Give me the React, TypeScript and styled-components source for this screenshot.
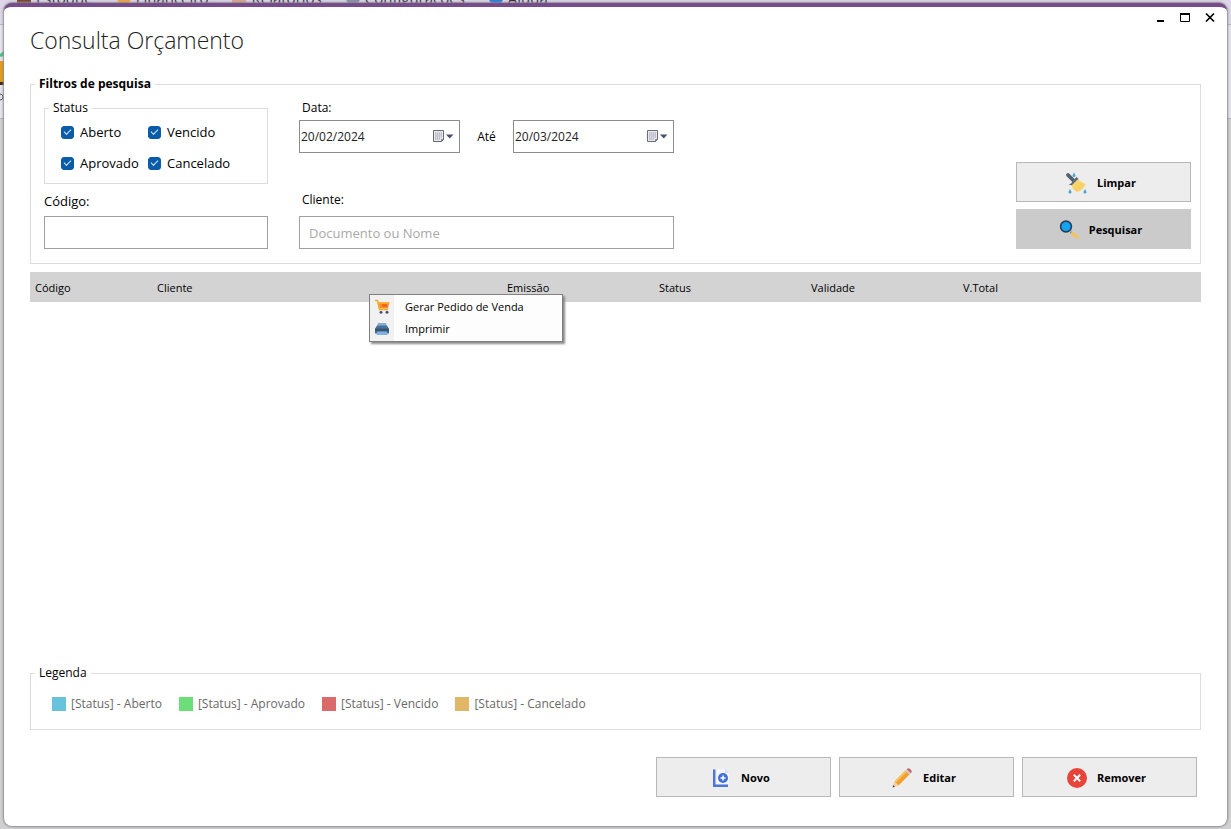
import React from "react";
import styled, { createGlobalStyle } from "styled-components";

const GlobalStyle = createGlobalStyle`
  *, *::before, *::after { box-sizing: border-box; }
  body {
    margin: 0;
    background: #d0d0d2;
    color: #000;
    font-family: "Open Sans", "Noto Sans", sans-serif;
    font-size: 12px;
    line-height: 16px;
  }
  button, input { font: inherit; color: inherit; }
`;

/* ---------- application behind the dialog ---------- */

const Desktop = styled.div`
  display: grid;
  min-height: 100vh;
  overflow: hidden;
`;

const Backdrop = styled.div`
  grid-area: 1 / 1;
  display: flex;
  flex-direction: column;
  min-width: 0;
`;

const MenuBar = styled.nav`
  display: flex;
  gap: 24px;
  height: 25px;
  padding-left: 17px;
  overflow: hidden;
  background: #dcd6e8;
  border-bottom: 1px solid #b9b6c0;
`;

const MenuLink = styled.a`
  display: flex;
  align-items: center;
  gap: 5px;
  height: 20px;
  margin-top: -12px;
  color: #33303c;
  font-size: 15px;
  line-height: 20px;
  text-decoration: none;
`;

const Dot = styled.span<{ $color: string; $round?: boolean }>`
  width: 14px;
  height: 14px;
  background: ${(p) => p.$color};
  border-radius: ${(p) => (p.$round ? "7px" : "1px")};
`;

const Ribbon = styled.div`
  height: 94px;
  background: #e4e2ea;
  border-bottom: 1px solid #b4b4b8;
`;

/* ---------- dialog ---------- */

const Window = styled.main`
  grid-area: 1 / 1;
  display: flex;
  flex-direction: column;
  min-width: 0;
  margin: 3px 4px;
  padding: 0 26px 29px;
  background: #fff;
  border-top: 4px solid #774b8c;
  border-radius: 8px;
  box-shadow: 0 0 2px 1px #8c8c8c;
`;

const TitleBar = styled.header`
  display: flex;
  justify-content: space-between;
  height: 69px;
`;

const Title = styled.h1`
  margin: 16px 0 0;
  color: #222;
  font-size: 23px;
  font-weight: 300;
  line-height: 34px;
`;

const WindowControls = styled.div`
  display: flex;
  gap: 1px;
  height: 22px;
  margin-right: -21px;
`;

const ControlButton = styled.button`
  display: grid;
  place-items: center;
  width: 24px;
  height: 22px;
  padding: 0;
  background: none;
  border: 0;
`;

const Group = styled.fieldset`
  min-width: 0;
  margin: 0;
  padding: 0 9px 14px 4px;
  border: 1px solid #dcdcdc;
`;

const GroupLegend = styled.legend<{ $bold?: boolean }>`
  padding: 0 4px;
  font-weight: ${(p) => (p.$bold ? 700 : 400)};
  line-height: 16px;
`;

const Filters = styled.div`
  display: flex;
  align-items: flex-end;
  gap: 31px;
  padding: 8px 0 0 9px;
`;

const FilterColumn = styled.div<{ $width: number }>`
  display: flex;
  flex-direction: column;
  justify-content: space-between;
  width: ${(p) => p.$width}px;
  height: 149px;
`;

const StatusGroup = styled(Group)`
  padding: 0 0 12px 4px;
`;

const CheckGrid = styled.div`
  display: grid;
  grid-template-columns: 87px 1fr;
  row-gap: 15px;
  padding: 8px 0 0 12px;
`;

const CheckLabel = styled.label`
  display: flex;
  align-items: center;
  gap: 6px;
  font-size: 13px;
`;

const CheckBox = styled.input`
  appearance: none;
  display: grid;
  place-items: center;
  width: 13px;
  height: 13px;
  margin: 0;
  background: #fff;
  border: 1px solid #0a5ca8;
  border-radius: 3px;

  &:checked { background: #0a5ca8; }
  &:checked::after {
    content: "";
    width: 7px;
    height: 4px;
    margin-bottom: 2px;
    border: solid #d5e8fa;
    border-width: 0 0 1px 1px;
    transform: rotate(-45deg);
  }
`;

const Field = styled.div`
  display: flex;
  flex-direction: column;
  gap: 4px;
`;

const FieldLabel = styled.label`
  padding-left: 3px;
`;

const CodeField = styled(Field)`
  gap: 7px;
`;

const ClientField = styled(Field)`
  gap: 8px;
`;

const CodeLabel = styled.label`
  font-size: 13px;
`;

const TextInput = styled.input`
  width: 100%;
  height: 33px;
  padding: 0 9px;
  background: #fff;
  border: 1px solid #a0a0a0;
  border-radius: 0;
  font-size: 13px;

  &::placeholder { color: #a9a9a9; opacity: 1; }
`;

const DateRow = styled.div`
  display: flex;
  align-items: center;
  justify-content: space-between;
`;

const DateBox = styled.div`
  display: flex;
  align-items: center;
  width: 161px;
  height: 33px;
  padding: 0 5px 0 1px;
  border: 1px solid #8c8c8c;
`;

const DateInput = styled.input`
  flex: 1;
  min-width: 0;
  height: 25px;
  padding: 0;
  background: none;
  border: 0;
  color: #222;
`;

const CalendarButton = styled.button`
  display: flex;
  padding: 0;
  background: none;
  border: 0;
`;

const FilterActions = styled.div`
  display: flex;
  flex-direction: column;
  gap: 7px;
  margin-left: auto;
`;

const ActionButton = styled.button<{ $active?: boolean }>`
  display: flex;
  align-items: center;
  justify-content: center;
  gap: 10px;
  width: 175px;
  height: 40px;
  padding: 1px 6px 0 0;
  background: ${(p) => (p.$active ? "#cbcbcb" : "#ededed")};
  border: 1px solid ${(p) => (p.$active ? "#cbcbcb" : "#b8b8b8")};
  font-size: 11px;
  font-weight: 700;
`;

/* ---------- results ---------- */

const Results = styled.section`
  position: relative;
  flex: 1;
  min-height: 200px;
  margin: 8px 0 2px;
`;

const Table = styled.table`
  width: 100%;
  border-collapse: collapse;
  table-layout: fixed;
`;

const HeadCell = styled.th<{ $width?: number }>`
  width: ${(p) => (p.$width ? `${p.$width}px` : "auto")};
  height: 30px;
  padding: 1px 5px 0;
  background: #d3d3d3;
  font-size: 11px;
  font-weight: 400;
  text-align: left;
`;

const ContextMenu = styled.div`
  position: absolute;
  top: 22px;
  left: 339px;
  display: flex;
  flex-direction: column;
  width: 194px;
  padding: 1px;
  background: linear-gradient(to right, #f1f1f1 24px, #fdfdfd 24px);
  border: 1px solid #808080;
  box-shadow: 2px 2px 2px #8a8a8a;
`;

const ContextItem = styled.button`
  display: flex;
  align-items: center;
  gap: 15px;
  height: 22px;
  padding: 0 0 0 3px;
  background: none;
  border: 0;
  font-size: 11px;
`;

/* ---------- footer ---------- */

const LegendList = styled.ul`
  display: flex;
  flex-wrap: wrap;
  gap: 17px;
  margin: 0;
  padding: 15px 0 3px 17px;
  list-style: none;
  color: #696969;
`;

const LegendItem = styled.li`
  display: flex;
  align-items: center;
  gap: 5px;
`;

const Swatch = styled.span<{ $color: string }>`
  width: 14px;
  height: 14px;
  background: ${(p) => p.$color};
`;

const Footer = styled.footer`
  display: flex;
  justify-content: flex-end;
  gap: 8px;
  padding: 27px 4px 0 0;
`;

/* ---------- icons ---------- */

const MinimizeIcon = () => (
  <svg width="12" height="12" viewBox="0 0 12 12" aria-hidden="true">
    <path d="M3 9h7" stroke="#000" strokeWidth="2" />
  </svg>
);

const MaximizeIcon = () => (
  <svg width="12" height="12" viewBox="0 0 12 12" aria-hidden="true">
    <path d="M1.500 2v7.500h9V2" fill="none" stroke="#000" />
    <path d="M1 2h10" stroke="#000" strokeWidth="2" />
  </svg>
);

const CloseIcon = () => (
  <svg width="12" height="12" viewBox="0 0 12 12" aria-hidden="true">
    <path d="M2 1.500l8 8M10 1.500l-8 8" stroke="#000" strokeWidth="1.700" />
  </svg>
);

const CalendarIcon = () => (
  <svg width="22" height="13" viewBox="0 0 22 13" aria-hidden="true">
    <path d="M1.500.5h10v9l-2 2h-8z" fill="#e9e9ee" stroke="#676a78" />
    <path d="M3 3h7M3 5h7M3 7h7M3 9h5M3.500 2.500v7.500M5.500 2.500v7.500M7.500 2.500v7M9.500 2.500v5" stroke="#b4b6c0" strokeWidth=".7" />
    <path d="M9.500 11.500v-2h2z" fill="#c4c5ce" stroke="#676a78" strokeWidth=".8" />
    <path d="M14 4.500h7.500L17.700 8.500z" fill="#46536b" />
  </svg>
);

const BrushIcon = () => (
  <svg width="22" height="22" viewBox="0 0 22 22" aria-hidden="true">
    <path d="M3 3l5 5" stroke="#50606e" strokeWidth="3.800" strokeLinecap="round" />
    <path d="M3.500 12.500c2-.3 3.500-1.500 4-3.500l4-4 2.200 2-6.200 6.500z" fill="#596a77" />
    <path d="M12.500 7.500c2.500 2 4.500 2.800 8 4.500-1 4-4.500 7-8.500 8-2-1-4.500-3.500-5.500-6.500z" fill="#fbd36b" />
    <path d="M10 15l2 4M12.500 13l2.500 4.500M14.500 10.500l3 4" stroke="#efc55d" strokeWidth=".7" />
    <path d="M9 .5l1.300 2.500a1.400 1.400 0 1 1-2.600 0zM5 17l1.300 2.500a1.400 1.400 0 1 1-2.600 0zM20 17l1.300 2.500a1.400 1.400 0 1 1-2.600 0z" fill="#4aa5d0" />
  </svg>
);

const SearchIcon = () => (
  <svg width="20" height="20" viewBox="0 0 20 20" aria-hidden="true">
    <path d="M11.500 12l1.800 1.500" stroke="#7b7565" strokeWidth="2" />
    <path d="M13.500 13.500l4.500 3.500" stroke="#f4c45c" strokeWidth="3.400" strokeLinecap="round" />
    <circle cx="7" cy="6.500" r="5.400" fill="#12a4f2" stroke="#23415c" strokeWidth="1.600" />
  </svg>
);

const CartIcon = () => (
  <svg width="16" height="16" viewBox="0 0 16 16" aria-hidden="true">
    <path d="M1 1.500h2.500l2 9H14" fill="none" stroke="#edb02b" strokeWidth="1.500" />
    <path d="M4.300 3h11.200l-1.500 6.500H5.700z" fill="#f7902a" />
    <path d="M8 5h5v3H8z" fill="#ee661f" />
    <path d="M4.300 3h11.200l-.4 1.500H4.600z" fill="#ffb436" />
    <circle cx="7" cy="13.300" r="1.500" fill="#4d5870" />
    <circle cx="13" cy="13.300" r="1.500" fill="#4d5870" />
  </svg>
);

const PrinterIcon = () => (
  <svg width="16" height="16" viewBox="0 0 16 16" aria-hidden="true">
    <path d="M4 2h8l1 4H3z" fill="#86aed0" />
    <path d="M3 4.500h10L15 8v4.500H1V8z" fill="#4a7299" />
    <path d="M1 7.500h14v3H1z" fill="#3b5470" />
    <path d="M3.500 10.500h9L13.500 14h-11z" fill="#7fb4e2" />
  </svg>
);

const NewIcon = () => (
  <svg width="20" height="20" viewBox="0 0 20 20" aria-hidden="true">
    <path d="M6 1h8l4 4v11H6z" fill="#f5f6fb" />
    <path d="M14 1l4 4h-4z" fill="#d9dce6" />
    <path d="M3.200 1.500v16.300H17" fill="none" stroke="#4c75d6" strokeWidth="2.400" />
    <circle cx="12" cy="10" r="5" fill="#4370d8" />
    <path d="M12 7.500v5M9.500 10h5" stroke="#fff" strokeWidth="1.500" />
  </svg>
);

const PencilIcon = () => (
  <svg width="22" height="22" viewBox="0 0 22 22" aria-hidden="true">
    <path d="M1.500 20.500l2-6 4 4z" fill="#f6cfa0" />
    <path d="M1.500 20.500l.8-2.400 1.600 1.600z" fill="#444" />
    <path d="M3.500 14.500L14.500 3.500l4 4L7.500 18.500z" fill="#f0a02f" />
    <path d="M3.500 14.500L14.500 3.500l1.300 1.300L4.800 15.800z" fill="#fbc25c" />
    <path d="M14.500 3.500l1.300-1.300 4 4-1.300 1.300z" fill="#c9ccd2" />
    <path d="M15.800 2.200c1-1 2.200-1.200 3.200-.2l1 1c1 1 .8 2.200-.2 3.200z" fill="#cf5a68" />
  </svg>
);

const RemoveIcon = () => (
  <svg width="20" height="20" viewBox="0 0 20 20" aria-hidden="true">
    <circle cx="10" cy="10" r="10" fill="#e8443a" />
    <path d="M6.800 6.800l6.400 6.400M13.200 6.800l-6.400 6.400" stroke="#fff" strokeWidth="2" />
  </svg>
);

/* ---------- data ---------- */

const menus = [
  { label: "Estoque", color: "#7a4630" },
  { label: "Financeiro", color: "#f0a63c", round: true },
  { label: "Relatórios", color: "#d9a58c" },
  { label: "Configurações", color: "#8790aa", round: true },
  { label: "Ajuda", color: "#2b7fdc", round: true },
];

const statuses = ["Aberto", "Vencido", "Aprovado", "Cancelado"];

const columns = [
  { label: "Código", width: 122 },
  { label: "Cliente", width: 350 },
  { label: "Emissão", width: 152 },
  { label: "Status", width: 152 },
  { label: "Validade", width: 152 },
  { label: "V.Total" },
];

const legend = [
  { label: "[Status] - Aberto", color: "#67c3dc" },
  { label: "[Status] - Aprovado", color: "#6cdd79" },
  { label: "[Status] - Vencido", color: "#db6b6b" },
  { label: "[Status] - Cancelado", color: "#e0b766" },
];

const DatePicker = ({ id, value, label }: { id: string; value: string; label: string }) => (
  <DateBox>
    <DateInput id={id} defaultValue={value} />
    <CalendarButton type="button" aria-label={label}>
      <CalendarIcon />
    </CalendarButton>
  </DateBox>
);

export default function App() {
  return (
    <Desktop>
      <GlobalStyle />
      <Backdrop>
        <MenuBar>
          {menus.map((m) => (
            <MenuLink key={m.label} href="#">
              <Dot $color={m.color} $round={m.round} />
              {m.label}
            </MenuLink>
          ))}
        </MenuBar>
        <Ribbon>
          <svg width="8" height="93" viewBox="0 0 8 93" aria-hidden="true">
            <path d="M0 31l5-4" stroke="#45c08a" strokeWidth="3" />
            <path d="M0 36h8v21H0z" fill="#e59a1c" />
            <path d="M0 57h8v3H0z" fill="#3a2a1a" />
            <circle cx="0" cy="72" r="3" fill="none" stroke="#55555c" />
          </svg>
        </Ribbon>
      </Backdrop>

      <Window>
        <TitleBar>
          <Title>Consulta Orçamento</Title>
          <WindowControls>
            <ControlButton type="button" aria-label="Minimizar"><MinimizeIcon /></ControlButton>
            <ControlButton type="button" aria-label="Maximizar"><MaximizeIcon /></ControlButton>
            <ControlButton type="button" aria-label="Fechar"><CloseIcon /></ControlButton>
          </WindowControls>
        </TitleBar>

        <Group>
          <GroupLegend $bold>Filtros de pesquisa</GroupLegend>
          <Filters>
            <FilterColumn $width={224}>
              <StatusGroup>
                <GroupLegend>Status</GroupLegend>
                <CheckGrid>
                  {statuses.map((s) => (
                    <CheckLabel key={s}>
                      <CheckBox type="checkbox" defaultChecked />
                      {s}
                    </CheckLabel>
                  ))}
                </CheckGrid>
              </StatusGroup>
              <CodeField>
                <CodeLabel htmlFor="codigo">Código:</CodeLabel>
                <TextInput id="codigo" />
              </CodeField>
            </FilterColumn>

            <FilterColumn $width={375}>
              <Field>
                <FieldLabel htmlFor="data-inicial">Data:</FieldLabel>
                <DateRow>
                  <DatePicker id="data-inicial" value="20/02/2024" label="Escolher data inicial" />
                  <label htmlFor="data-final">Até</label>
                  <DatePicker id="data-final" value="20/03/2024" label="Escolher data final" />
                </DateRow>
              </Field>
              <ClientField>
                <FieldLabel htmlFor="cliente">Cliente:</FieldLabel>
                <TextInput id="cliente" placeholder="Documento ou Nome" />
              </ClientField>
            </FilterColumn>

            <FilterActions>
              <ActionButton type="button"><BrushIcon />Limpar</ActionButton>
              <ActionButton type="button" $active><SearchIcon />Pesquisar</ActionButton>
            </FilterActions>
          </Filters>
        </Group>

        <Results>
          <Table>
            <thead>
              <tr>
                {columns.map((c) => (
                  <HeadCell key={c.label} $width={c.width} scope="col">{c.label}</HeadCell>
                ))}
              </tr>
            </thead>
          </Table>
          <ContextMenu role="menu">
            <ContextItem type="button" role="menuitem"><CartIcon />Gerar Pedido de Venda</ContextItem>
            <ContextItem type="button" role="menuitem"><PrinterIcon />Imprimir</ContextItem>
          </ContextMenu>
        </Results>

        <Group>
          <GroupLegend>Legenda</GroupLegend>
          <LegendList>
            {legend.map((l) => (
              <LegendItem key={l.label}>
                <Swatch $color={l.color} />
                {l.label}
              </LegendItem>
            ))}
          </LegendList>
        </Group>

        <Footer>
          <ActionButton type="button"><NewIcon />Novo</ActionButton>
          <ActionButton type="button"><PencilIcon />Editar</ActionButton>
          <ActionButton type="button"><RemoveIcon />Remover</ActionButton>
        </Footer>
      </Window>
    </Desktop>
  );
}
